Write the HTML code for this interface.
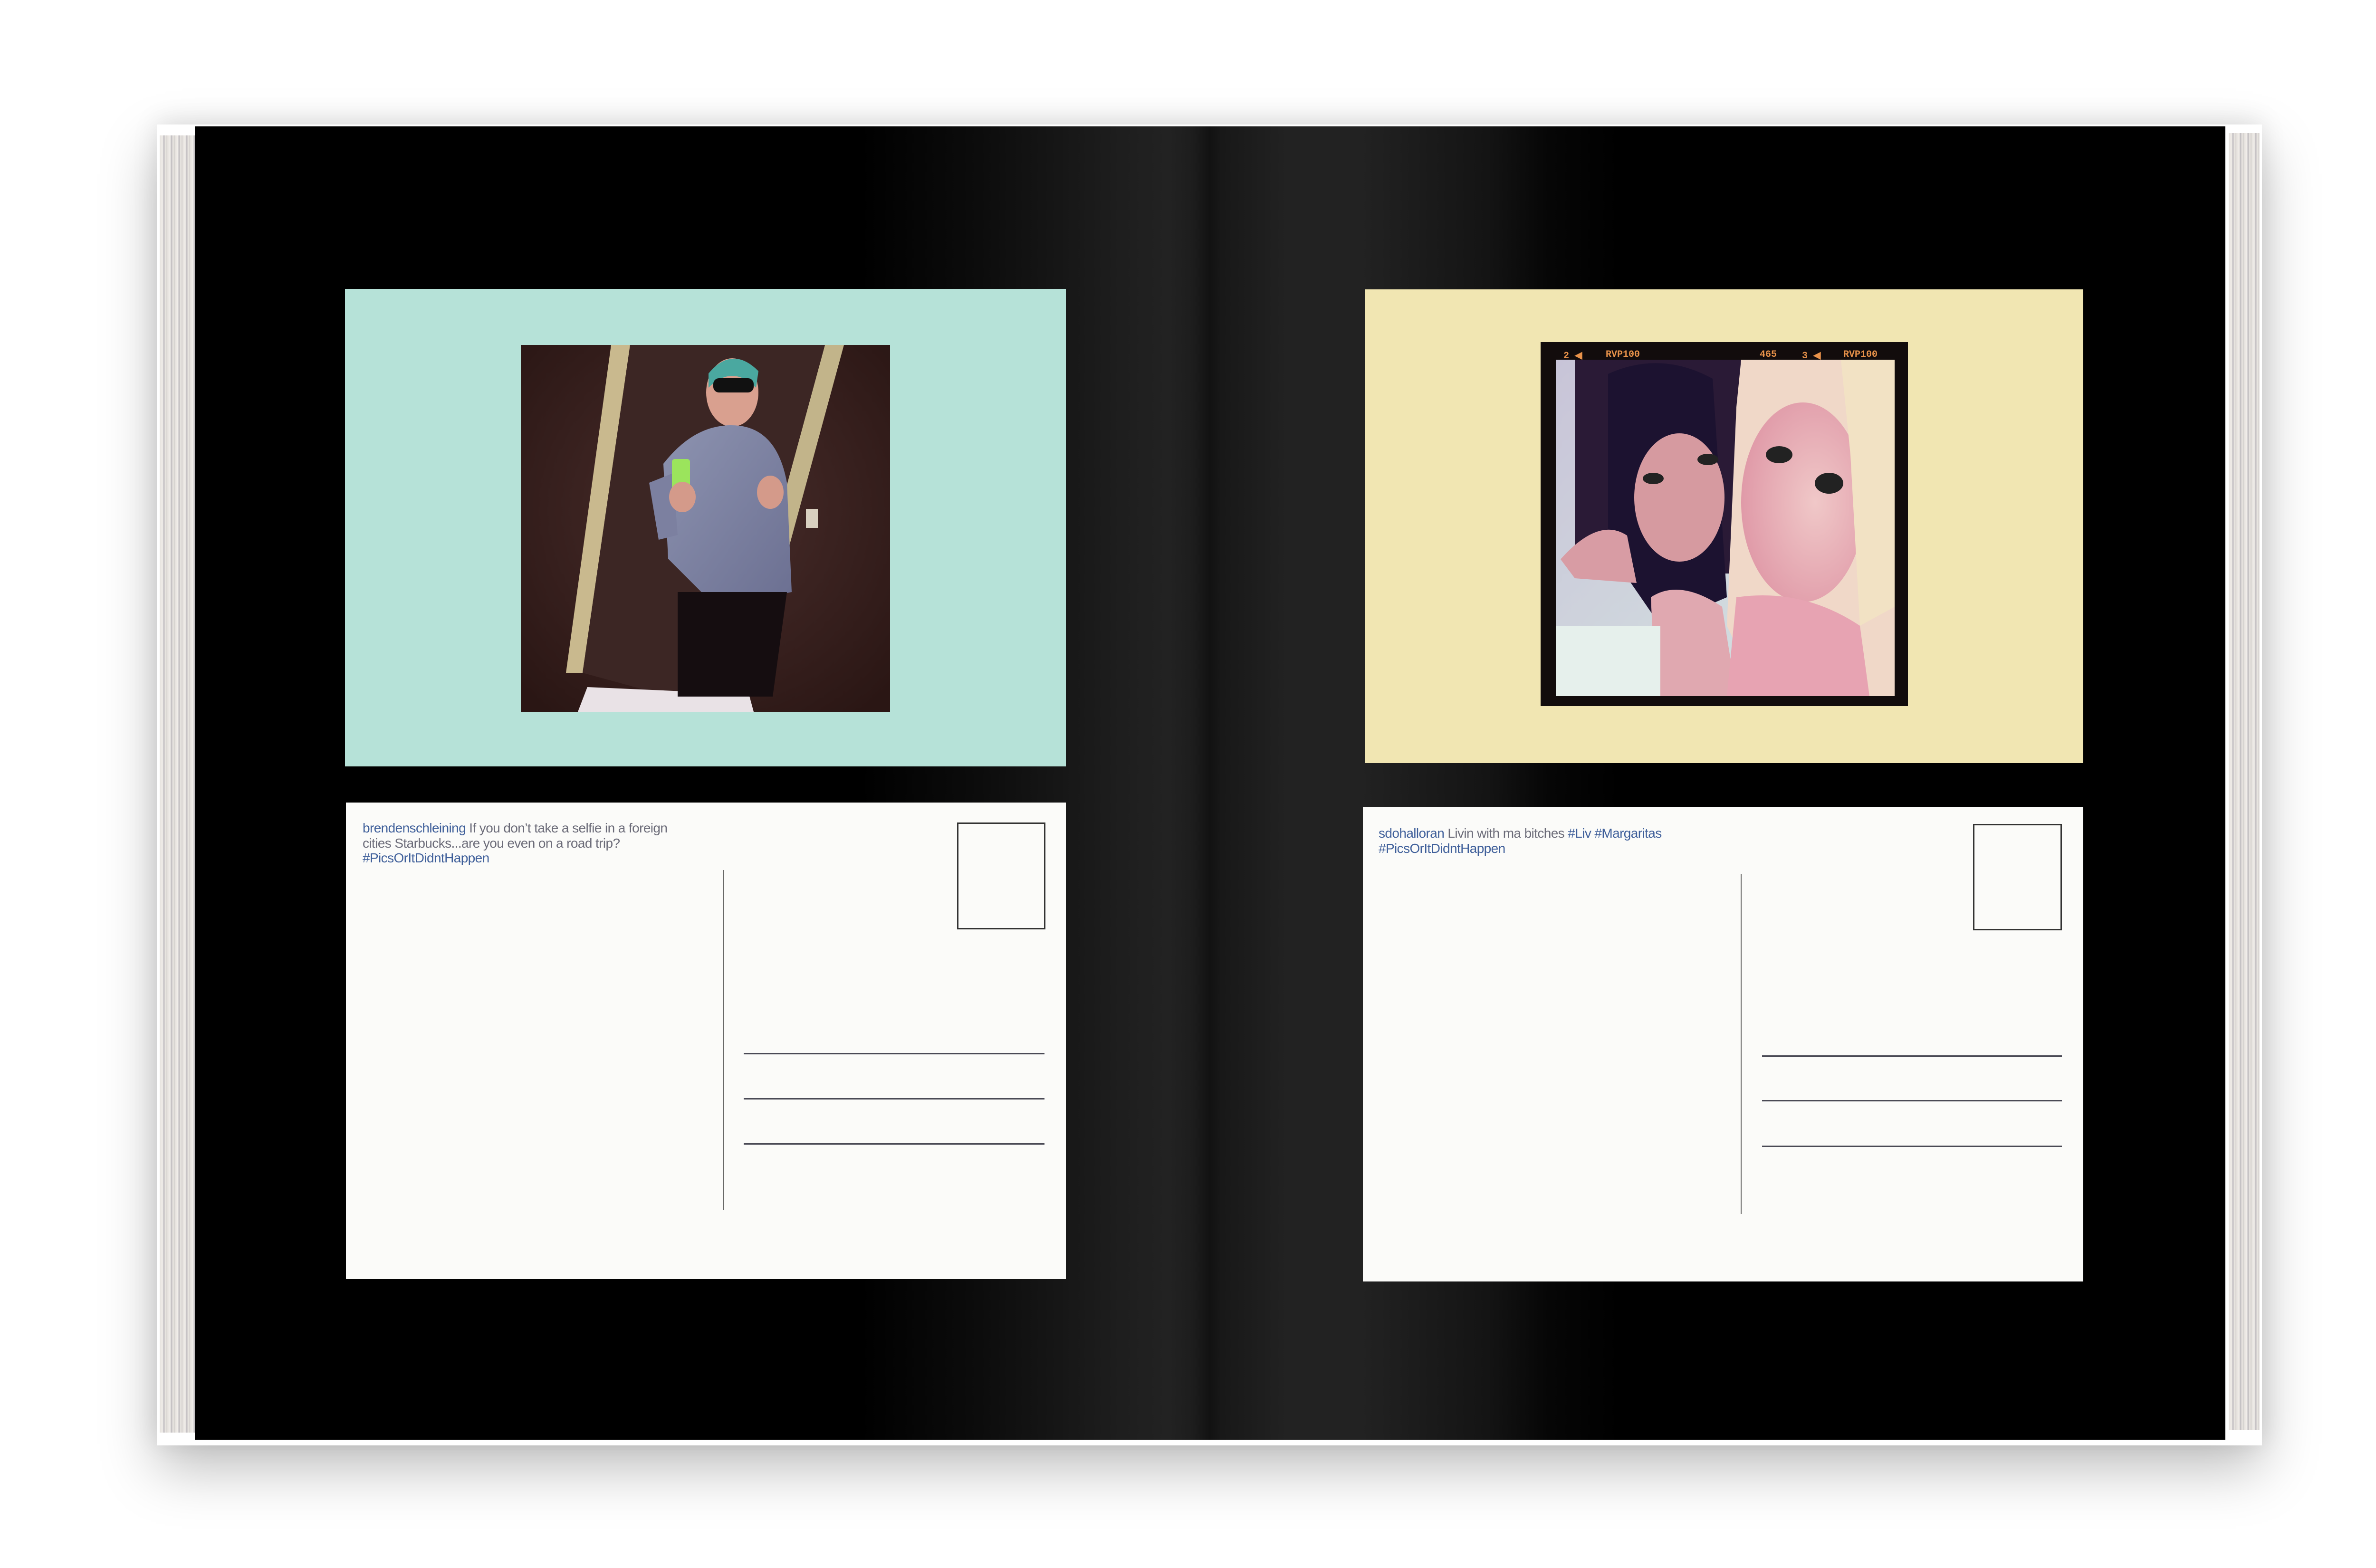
<!DOCTYPE html>
<html><head><meta charset="utf-8">
<style>
html,body{margin:0;padding:0;}
body{width:5100px;height:3300px;background:#fff;position:relative;overflow:hidden;font-family:"Liberation Sans",Arial,sans-serif;}
.abs{position:absolute;}
.shadow{position:absolute;left:330px;top:262px;width:4430px;height:2780px;box-shadow:0 50px 110px rgba(0,0,0,0.25),0 -8px 50px rgba(0,0,0,0.10);}
.stack{position:absolute;background:repeating-linear-gradient(90deg,#e4e0dc 0,#f1eeea 6px,#bdb9bd 9px,#ebe8e3 12px,#d2cfcc 16px);}
.spread{position:absolute;left:410px;top:266px;width:4273px;height:2764px;
background:linear-gradient(90deg,#000 0,#000 1400px,#0c0c0c 1650px,#1e1e1e 1950px,#222 2050px,#1d1d1d 2100px,#121212 2137px,#181818 2160px,#222 2300px,#222 2450px,#141414 2720px,#060606 2850px,#000 3000px,#000 100%);}
.card{position:absolute;}
.pc{position:absolute;background:#fbfbf9;}
.txt{position:absolute;font-size:28px;line-height:31px;color:#6b6b78;letter-spacing:-0.6px;white-space:nowrap;}
.b{color:#3f5f9a;}
.stamp{position:absolute;border:3px solid #333;box-sizing:border-box;}
.vl{position:absolute;width:2px;background:#666;}
.hl{position:absolute;height:3px;background:#4a4a55;}
.fr{position:absolute;font-family:"Liberation Mono",monospace;font-size:20px;color:#e8924a;font-weight:bold;}
</style></head><body>
<div class="shadow"></div>
<div class="stack" style="left:336px;top:285px;width:74px;height:2730px;"></div>
<div class="stack" style="left:4690px;top:280px;width:65px;height:2730px;"></div>
<div class="abs" style="left:410px;top:266px;width:4280px;height:2770px;background:#fff;"></div>
<div class="spread"></div>

<!-- left mint card -->
<div class="card" style="left:726px;top:608px;width:1517px;height:1005px;background:#b6e2d8;"></div>
<svg class="abs" style="left:1096px;top:726px" width="777" height="772" viewBox="0 0 777 772">
<defs>
<radialGradient id="bg1" cx="0.5" cy="0.45" r="0.7"><stop offset="0" stop-color="#4a2e2c"/><stop offset="1" stop-color="#2a1614"/></radialGradient>
<linearGradient id="sw" x1="0" y1="0" x2="1" y2="1"><stop offset="0" stop-color="#8d93b0"/><stop offset="1" stop-color="#6c7092"/></linearGradient>
</defs>
<rect width="777" height="772" fill="url(#bg1)"/>
<polygon points="190,0 230,0 130,690 95,690" fill="#c9b98e"/>
<polygon points="640,0 680,0 470,772 430,772" fill="#c2b48a"/>
<polygon points="230,0 640,0 430,772 130,690" fill="#3c2624"/>
<rect x="600" y="345" width="25" height="40" fill="#d8d0c0"/>
<polygon points="140,720 480,735 490,772 120,772" fill="#e9e2e6"/>
<ellipse cx="445" cy="100" rx="55" ry="72" fill="#d9a08f"/>
<path d="M395,60 Q445,0 500,55 L495,90 Q445,40 395,90Z" fill="#4aa8a0"/>
<rect x="405" y="70" width="85" height="30" rx="12" fill="#111"/>
<path d="M300,250 Q370,160 460,170 Q540,180 560,290 L570,520 Q470,540 380,520 L310,450Z" fill="url(#sw)"/>
<path d="M270,290 L320,270 L330,400 L290,410Z" fill="#7c80a0"/>
<rect x="318" y="240" width="38" height="70" rx="6" fill="#9be45c"/>
<ellipse cx="340" cy="320" rx="28" ry="32" fill="#d49a8a"/>
<ellipse cx="525" cy="310" rx="28" ry="35" fill="#d49a8a"/>
<path d="M330,520 L560,520 L530,740 L330,740Z" fill="#150d10"/>
</svg>

<!-- right yellow card -->
<div class="card" style="left:2872px;top:609px;width:1512px;height:997px;background:#f1e6b2;"></div>
<div class="abs" style="left:3242px;top:720px;width:773px;height:766px;background:#120c0c;"></div>
<div class="fr" style="left:3290px;top:735px">2 ◀</div>
<div class="fr" style="left:3379px;top:735px">RVP100</div>
<div class="fr" style="left:3703px;top:735px">465</div>
<div class="fr" style="left:3792px;top:735px">3 ◀</div>
<div class="fr" style="left:3879px;top:735px">RVP100</div>
<svg class="abs" style="left:3274px;top:757px" width="713" height="708" viewBox="0 0 713 708">
<defs>
<linearGradient id="gl" x1="0" y1="0" x2="1" y2="1"><stop offset="0" stop-color="#c8c4d8"/><stop offset="1" stop-color="#d6e6e2"/></linearGradient>
<radialGradient id="bl" cx="0.6" cy="0.5" r="0.6"><stop offset="0" stop-color="#f0c8c8"/><stop offset="1" stop-color="#e09aa8"/></radialGradient>
</defs>
<rect width="713" height="708" fill="url(#gl)"/>
<rect x="40" y="0" width="360" height="450" fill="#2a1a36"/>
<path d="M110,30 Q220,-20 330,40 L360,500 L220,560 L110,400Z" fill="#1c1230"/>
<ellipse cx="260" cy="290" rx="95" ry="135" fill="#d69aa0"/>
<path d="M10,420 Q90,330 150,370 L170,470 L40,460Z" fill="#d89ca4"/>
<path d="M200,500 Q260,460 350,520 L380,708 L210,708Z" fill="#e0a8b0"/>
<path d="M390,0 L713,0 L713,708 L430,708 L360,560 L380,100Z" fill="#f0d8c8"/>
<ellipse cx="520" cy="300" rx="130" ry="210" fill="url(#bl)"/>
<path d="M600,0 L713,0 L713,520 L640,560 L620,200Z" fill="#f2e2c4"/>
<path d="M380,500 Q520,480 640,560 L660,708 L360,708Z" fill="#e7a3b2"/>
<ellipse cx="470" cy="200" rx="28" ry="18" fill="#222"/>
<ellipse cx="575" cy="260" rx="30" ry="22" fill="#222"/>
<ellipse cx="205" cy="250" rx="22" ry="12" fill="#222"/>
<ellipse cx="320" cy="210" rx="22" ry="12" fill="#222"/>
<rect x="0" y="560" width="220" height="148" fill="#e6f0ec"/>
</svg>

<!-- left postcard -->
<div class="pc" style="left:728px;top:1689px;width:1515px;height:1003px;"></div>
<div class="txt" style="left:763px;top:1727px"><span class="b">brendenschleining</span> If you don’t take a selfie in a foreign</div>
<div class="txt" style="left:763px;top:1759px">cities Starbucks...are you even on a road trip?</div>
<div class="txt b" style="left:763px;top:1790px">#PicsOrItDidntHappen</div>
<div class="stamp" style="left:2014px;top:1731px;width:186px;height:225px;"></div>
<div class="vl" style="left:1521px;top:1831px;height:715px;"></div>
<div class="hl" style="left:1565px;top:2216px;width:633px;"></div>
<div class="hl" style="left:1565px;top:2311px;width:633px;"></div>
<div class="hl" style="left:1565px;top:2406px;width:633px;"></div>

<!-- right postcard -->
<div class="pc" style="left:2868px;top:1698px;width:1516px;height:999px;"></div>
<div class="txt" style="left:2901px;top:1738px"><span class="b">sdohalloran</span> Livin with ma bitches <span class="b">#Liv #Margaritas</span></div>
<div class="txt b" style="left:2901px;top:1770px">#PicsOrItDidntHappen</div>
<div class="stamp" style="left:4152px;top:1734px;width:187px;height:224px;"></div>
<div class="vl" style="left:3663px;top:1839px;height:716px;"></div>
<div class="hl" style="left:3708px;top:2221px;width:631px;"></div>
<div class="hl" style="left:3708px;top:2315px;width:631px;"></div>
<div class="hl" style="left:3708px;top:2411px;width:631px;"></div>
</body></html>
